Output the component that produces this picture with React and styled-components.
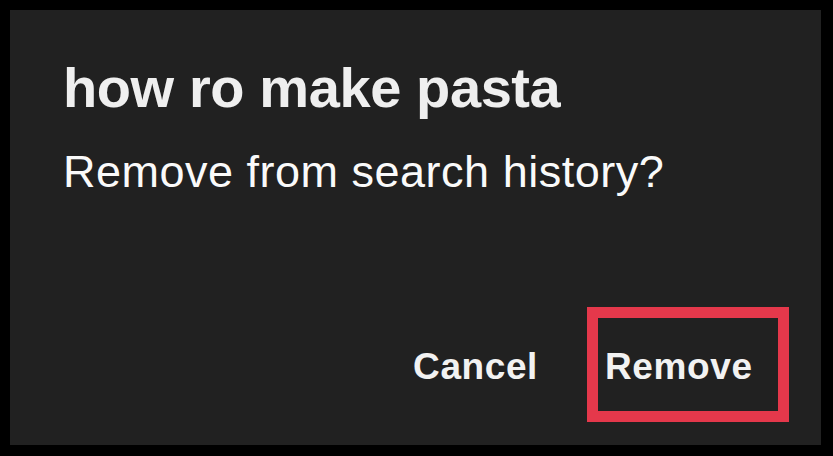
import React from 'react';
import styled, { createGlobalStyle } from 'styled-components';

const GlobalStyle = createGlobalStyle`
  html, body {
    margin: 0;
    padding: 0;
    background: #000;
  }
  body {
    font-family: 'Liberation Sans', Arial, sans-serif;
  }
`;

const Frame = styled.div`
  width: 833px;
  height: 456px;
  box-sizing: border-box;
  padding: 10px 12px 11px 10px;
  background: #000;
`;

const Dialog = styled.div`
  height: 100%;
  box-sizing: border-box;
  background: #212121;
  display: flex;
  flex-direction: column;
  padding: 46px 32px 23px 53px;
`;

const Title = styled.h1`
  margin: 0;
  font-size: 56px;
  line-height: 64px;
  font-weight: 700;
  letter-spacing: -0.4px;
  color: #efefef;
`;

const Message = styled.p`
  margin: 26px 0 0;
  font-size: 45px;
  line-height: 52px;
  letter-spacing: 0.5px;
  color: #fafafa;
`;

const Actions = styled.div`
  margin-top: auto;
  display: flex;
  justify-content: flex-end;
  align-items: baseline;
  gap: 49px;
`;

const TextButton = styled.button`
  background: none;
  border: none;
  padding: 0;
  font-family: inherit;
  font-size: 37px;
  line-height: 44px;
  font-weight: 700;
  letter-spacing: 0.6px;
  color: #f2f2f2;
  cursor: pointer;
`;

const Highlight = styled.div`
  width: 202px;
  height: 115px;
  box-sizing: border-box;
  border: 11px solid #e5384b;
  padding: 27px 0 0 7px;
`;

export default function App() {
  return (
    <>
      <GlobalStyle />
      <Frame>
        <Dialog>
          <Title>how ro make pasta</Title>
          <Message>Remove from search history?</Message>
          <Actions>
            <TextButton>Cancel</TextButton>
            <Highlight>
              <TextButton>Remove</TextButton>
            </Highlight>
          </Actions>
        </Dialog>
      </Frame>
    </>
  );
}
